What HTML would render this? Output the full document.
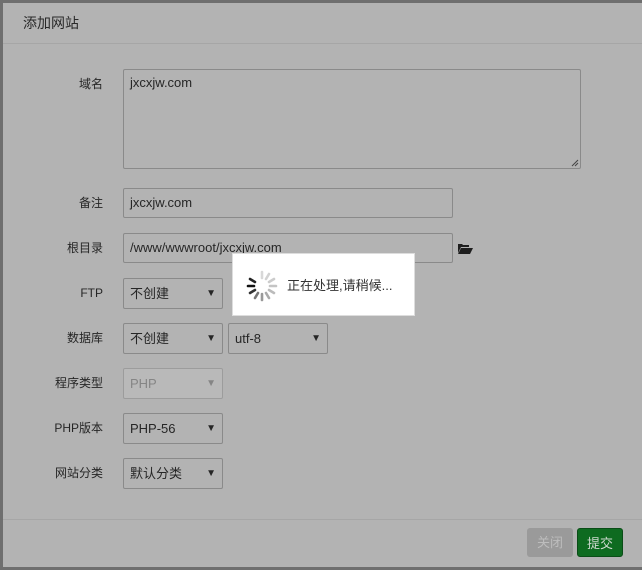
<!DOCTYPE html>
<html><head><meta charset="utf-8"><style>
*{box-sizing:border-box;margin:0;padding:0}
body{width:642px;height:570px;background:#6f6f6f;position:relative;overflow:hidden;font-family:"Liberation Sans","Noto Sans CJK SC",sans-serif;font-size:12px;color:#262626}
.dlg{position:absolute;left:3px;top:3px;width:639px;height:564px;background:#b3b3b3}
.hd{position:absolute;left:0;top:0;width:100%;height:41px;border-bottom:1px solid #a6a6a6;font-size:14px;line-height:41px;padding-left:20px;color:#2a2a2a}
.ft{position:absolute;left:0;top:516px;width:100%;border-top:1px solid #a6a6a6}
.lb{position:absolute;width:100px;text-align:right;line-height:30px;left:0}
.in{position:absolute;border:1px solid #8a8a8a;border-radius:2px;line-height:28px;padding-left:6px;font-size:13px}
.sel{line-height:29px}
.sel::after{content:"▼";position:absolute;right:6px;top:0;font-size:10px;line-height:29px}
.btn{position:absolute;top:525px;width:46px;height:29px;border-radius:3px;line-height:29px;text-align:center;font-size:13px}
</style></head><body>
<div class="dlg">
<div class="hd">添加网站</div>
<div class="lb" style="top:66px">域名</div>
<div class="in" style="left:120px;top:66px;width:458px;height:100px;line-height:26px">jxcxjw.com
<svg style="position:absolute;right:1px;bottom:1px" width="8" height="8"><path d="M1 7L7 1M4 7L7 4" stroke="#444" stroke-width="1"/></svg></div>
<div class="lb" style="top:185px">备注</div>
<div class="in" style="left:120px;top:185px;width:330px;height:30px">jxcxjw.com</div>
<div class="lb" style="top:230px">根目录</div>
<div class="in" style="left:120px;top:230px;width:330px;height:30px">/www/wwwroot/jxcxjw.com</div>
<svg style="position:absolute;left:455px;top:240px" width="15" height="11"><path d="M0 1h4l1 1h6v2H3L0 10z M3 5h12l-3 6H0z" fill="#1e1e1e"/></svg>
<div class="lb" style="top:275px">FTP</div>
<div class="in sel" style="left:120px;top:275px;width:100px;height:31px">不创建</div>
<div class="lb" style="top:320px">数据库</div>
<div class="in sel" style="left:120px;top:320px;width:100px;height:31px">不创建</div>
<div class="in sel" style="left:225px;top:320px;width:100px;height:31px">utf-8</div>
<div class="lb" style="top:365px">程序类型</div>
<div class="in sel" style="left:120px;top:365px;width:100px;height:31px;background:#b9b9b9;color:#858585;border-color:#9c9c9c">PHP</div>
<div class="lb" style="top:410px">PHP版本</div>
<div class="in sel" style="left:120px;top:410px;width:100px;height:31px">PHP-56</div>
<div class="lb" style="top:455px">网站分类</div>
<div class="in sel" style="left:120px;top:455px;width:100px;height:31px">默认分类</div>
<div class="ft"></div>
<div class="btn" style="left:524px;background:#9a9a9a;color:#bdbdbd">关闭</div>
<div class="btn" style="left:574px;background:#0e6b20;color:#cfd9cf;border:1px solid #0a4d17">提交</div>
</div>
<div style="position:absolute;left:232px;top:253px;width:183px;height:63px;background:#fff;border:1px solid #ddd">
<svg style="position:absolute;left:13px;top:16px" width="32" height="32" viewBox="-16 -16 32 32">
<g stroke-width="2.6" stroke-linecap="round">
<line x1="-14" y1="0" x2="-8" y2="0" stroke="#111"/>
<line x1="-12" y1="-7" x2="-7" y2="-4" stroke="#222"/>
<line x1="-12" y1="7" x2="-7" y2="4" stroke="#333"/>
<line x1="-7" y1="12" x2="-4" y2="7" stroke="#777"/>
<line x1="0" y1="14" x2="0" y2="8" stroke="#999"/>
<line x1="7" y1="12" x2="4" y2="7" stroke="#aaa"/>
<line x1="12" y1="7" x2="7" y2="4" stroke="#bbb"/>
<line x1="14" y1="0" x2="8" y2="0" stroke="#c4c4c4"/>
<line x1="12" y1="-7" x2="7" y2="-4" stroke="#ccc"/>
<line x1="7" y1="-12" x2="4" y2="-7" stroke="#d2d2d2"/>
<line x1="0" y1="-14" x2="0" y2="-8" stroke="#d8d8d8"/>
</g></svg>
<div style="position:absolute;left:54px;top:0;line-height:63px;font-size:13px;color:#333">正在处理,请稍候...</div>
</div>
</body></html>
